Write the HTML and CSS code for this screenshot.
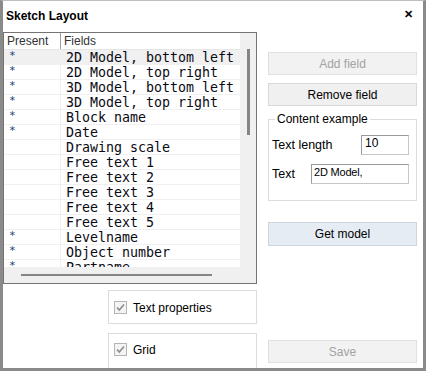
FILE: index.html
```html
<!DOCTYPE html>
<html lang="en">
<head>
    <meta charset="UTF-8">
    <title>Sketch Layout</title>
    <link rel="stylesheet" href="styles.css">
</head>
<body>
    <div class="window">
        <!-- Title bar -->
        <div class="titlebar">
            <span class="title">Sketch Layout</span>
            <span class="close">&#x2715;</span>
        </div>

        <div class="content">
            <!-- Left side: field list and options -->
            <div class="left-col">
                <div class="listbox">
                    <div class="list-view">
                        <div class="list-header">
                            <div class="col-present">Present</div>
                            <div class="col-fields">Fields</div>
                        </div>
                        <div class="list-row selected"><div class="col-present star">*</div><div class="col-fields">2D Model, bottom left</div></div>
                        <div class="list-row"><div class="col-present star">*</div><div class="col-fields">2D Model, top right</div></div>
                        <div class="list-row"><div class="col-present star">*</div><div class="col-fields">3D Model, bottom left</div></div>
                        <div class="list-row"><div class="col-present star">*</div><div class="col-fields">3D Model, top right</div></div>
                        <div class="list-row"><div class="col-present star">*</div><div class="col-fields">Block name</div></div>
                        <div class="list-row"><div class="col-present star">*</div><div class="col-fields">Date</div></div>
                        <div class="list-row"><div class="col-present star"></div><div class="col-fields">Drawing scale</div></div>
                        <div class="list-row"><div class="col-present star"></div><div class="col-fields">Free text 1</div></div>
                        <div class="list-row"><div class="col-present star"></div><div class="col-fields">Free text 2</div></div>
                        <div class="list-row"><div class="col-present star"></div><div class="col-fields">Free text 3</div></div>
                        <div class="list-row"><div class="col-present star"></div><div class="col-fields">Free text 4</div></div>
                        <div class="list-row"><div class="col-present star"></div><div class="col-fields">Free text 5</div></div>
                        <div class="list-row"><div class="col-present star">*</div><div class="col-fields">Levelname</div></div>
                        <div class="list-row"><div class="col-present star">*</div><div class="col-fields">Object number</div></div>
                        <div class="list-row"><div class="col-present star">*</div><div class="col-fields">Partname</div></div>
                    </div>
                    <div class="vscroll"><div class="vthumb"></div></div>
                    <div class="hscroll"><div class="hthumb"></div></div>
                    <div class="corner"></div>
                </div>

                <div class="option-box">
                    <span class="checkbox">
                        <svg width="13" height="13" viewBox="0 0 13 13"><rect x="0.5" y="0.5" width="12" height="12" fill="#f4f4f4" stroke="#b4b4b4"/><path d="M3 6.5 L5.3 9 L10 3.5" fill="none" stroke="#8c8c8c" stroke-width="1.6"/></svg>
                    </span>
                    <span>Text properties</span>
                </div>
                <div class="option-box last">
                    <span class="checkbox">
                        <svg width="13" height="13" viewBox="0 0 13 13"><rect x="0.5" y="0.5" width="12" height="12" fill="#f4f4f4" stroke="#b4b4b4"/><path d="M3 6.5 L5.3 9 L10 3.5" fill="none" stroke="#8c8c8c" stroke-width="1.6"/></svg>
                    </span>
                    <span>Grid</span>
                </div>
            </div>

            <!-- Right side: buttons -->
            <div class="right-col">
                <button class="btn" disabled>Add field</button>
                <button class="btn">Remove field</button>

                <fieldset class="example">
                    <legend>Content example</legend>
                    <div class="example-row">
                        <label>Text length</label>
                        <div class="input short">10</div>
                    </div>
                    <div class="example-row">
                        <label>Text</label>
                        <div class="input long">2D Model,</div>
                    </div>
                </fieldset>

                <button class="btn default">Get model</button>
                <div class="spacer"></div>
                <button class="btn" disabled>Save</button>
            </div>
        </div>
    </div>
</body>
</html>
```

FILE: styles.css
```css
body {
    margin: 0;
    font-family: 'Liberation Sans', Arial, sans-serif;
    font-size: 12px;
    color: #000;
    background: #fff;
}

.window {
    width: 426px;
    height: 371px;
    box-sizing: border-box;
    border: 3px solid #8a8a8a;
    border-top: 1px solid #bdbdbd;
    background: #fff;
    display: flex;
    flex-direction: column;
    overflow: hidden;
}

.titlebar {
    height: 31px;
    display: flex;
    align-items: center;
    justify-content: space-between;
    padding: 0 10px 0 3px;
    flex-shrink: 0;
}

.title {
    font-weight: bold;
    font-size: 12px;
    margin-top: -2px;
}

.close {
    font-size: 11px;
    font-weight: bold;
    margin-top: -4px;
}

.content {
    display: grid;
    grid-template-columns: 254px 149px;
    column-gap: 11px;
    flex: 1;
    min-height: 0;
}

/* List box */
.listbox {
    width: 254px;
    height: 252px;
    box-sizing: border-box;
    border: 1px solid #747474;
    display: grid;
    grid-template-columns: 236px 16px;
    grid-template-rows: 234px 16px;
}

.list-view {
    overflow: hidden;
    font-family: 'DejaVu Sans Mono', monospace;
}

.list-header {
    display: flex;
    height: 16px;
    border-bottom: 1px solid #e5e5e5;
    font-family: 'Liberation Sans', Arial, sans-serif;
    font-size: 12px;
    color: #333;
    line-height: 17px;
}

.list-header .col-present {
    border-right: 1px solid #a0a0a0;
    padding-left: 3px;
}

.list-header .col-fields {
    padding-left: 3px;
}

.col-present {
    width: 57px;
    box-sizing: border-box;
    flex-shrink: 0;
}

.list-row {
    display: flex;
    height: 15px;
    box-sizing: border-box;
    border-bottom: 1px solid #f0f0f0;
    font-size: 13.3px;
    line-height: 16px;
    white-space: nowrap;
    color: #0a0a14;
}

.list-row.selected {
    background: #f0f0f0;
}

.list-row .col-present {
    border-right: 1px solid #f0f0f0;
}

.list-row .col-fields {
    padding-left: 5px;
}

.star {
    color: #1a3a7a;
    font-size: 11px;
    padding-left: 5px;
    line-height: 12px;
}

.vscroll {
    background: #f0f0f0;
    display: flex;
    justify-content: center;
    grid-row: 1;
    grid-column: 2;
}

.vthumb {
    width: 3px;
    height: 86px;
    margin-top: 16px;
    background: #858585;
}

.hscroll {
    background: #f0f0f0;
    grid-row: 2;
    grid-column: 1;
    display: flex;
    align-items: center;
}

.hthumb {
    width: 191px;
    height: 2px;
    margin-left: 17px;
    background: #858585;
}

.corner {
    background: #f0f0f0;
}

/* Check boxes */
.option-box {
    width: 149px;
    height: 34px;
    box-sizing: border-box;
    border: 1px solid #dcdcdc;
    margin: 6px 0 0 105px;
    display: flex;
    align-items: center;
    gap: 6px;
    padding-left: 5px;
    padding-top: 1px;
}

.option-box.last {
    margin-top: 9px;
    height: 40px;
    align-items: flex-start;
    padding-top: 9px;
}

.checkbox {
    display: flex;
}

/* Right column */
.right-col {
    display: flex;
    flex-direction: column;
    padding-top: 20px;
    padding-bottom: 2px;
}

.btn {
    font-family: 'Liberation Sans', Arial, sans-serif;
    font-size: 12px;
    height: 23px;
    background: #f0f0f0;
    border: 1px solid #d9d9d9;
    color: #000;
    padding: 0;
    margin: 0 0 8px 0;
}

.btn:disabled {
    color: #a3a3a3;
    background: #f2f2f2;
    border-color: #e0e0e0;
}

.btn.default {
    background: #e5ecf4;
    border-color: #cdd6df;
    height: 24px;
    margin-top: 21px;
}

.spacer {
    flex: 1;
}

.example {
    margin: 0;
    border: 1px solid #dcdcdc;
    padding: 4px 7px 12px 3px;
    margin-top: -2px;
}

.example legend {
    padding: 0 2px;
    margin-left: 3px;
    line-height: 14px;
}

.example-row {
    display: flex;
    align-items: center;
    justify-content: space-between;
    height: 29px;
    font-size: 12.5px;
}

.input {
    box-sizing: border-box;
    background: #fff;
    border: 1px solid #c6c6c6;
    border-top-color: #9a9a9a;
    border-left-color: #9a9a9a;
    font-size: 11px;
    padding-left: 2px;
    height: 20px;
    line-height: 15px;
}

.input.short {
    width: 48px;
    padding-left: 3px;
    font-size: 12px;
}

.input.long {
    width: 98px;
    letter-spacing: -0.2px;
}
```
